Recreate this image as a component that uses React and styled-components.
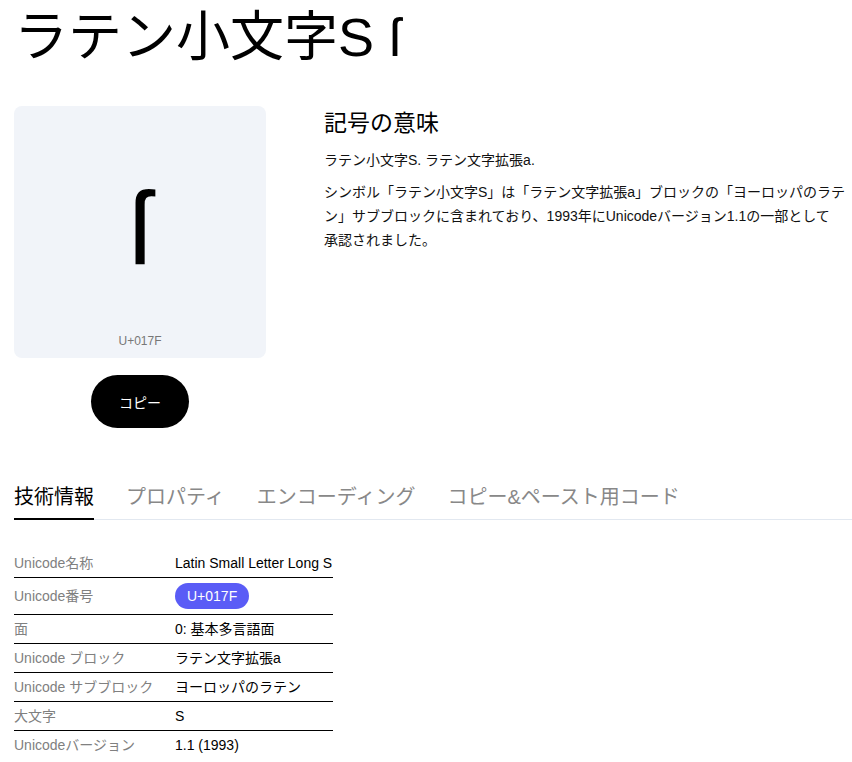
import React, { useState } from 'react';
import styled, { createGlobalStyle } from 'styled-components';

const GlobalStyle = createGlobalStyle`
    html, body {
        margin: 0;
        padding: 0;
        background: #fff;
    }
    body {
        font-family: "Liberation Sans", "Noto Sans CJK JP", sans-serif;
        color: #000;
    }
`

const Page = styled.div`
    padding: 0 0 0 14px;
`
const Title = styled.h1`
    margin: 0;
    padding-top: 6px;
    font-size: 54px;
    font-weight: 400;
    line-height: 63px;
    letter-spacing: 0;
`
const Overview = styled.section`
    display: grid;
    grid-template-columns: 252px 1fr;
    column-gap: 58px;
    margin-top: 37px;
`
const PreviewColumn = styled.div`
    display: flex;
    flex-direction: column;
    align-items: center;
`
const GlyphBox = styled.div`
    position: relative;
    width: 252px;
    height: 252px;
    border-radius: 8px;
    background: #f1f4f9;
    display: flex;
    align-items: center;
    justify-content: center;
`
const Glyph = styled.span`
    font-family: "Liberation Sans", sans-serif;
    font-size: 104px;
    line-height: 1;
    margin-top: -8px;
`
const CodeLabel = styled.span`
    position: absolute;
    left: 0;
    right: 0;
    bottom: 10px;
    text-align: center;
    font-size: 12px;
    color: #777;
`
const CopyButton = styled.button`
    margin-top: 17px;
    width: 98px;
    height: 53px;
    border: none;
    border-radius: 27px;
    background: #000;
    color: #fff;
    font-family: inherit;
    font-size: 14px;
    cursor: pointer;
`
const Meaning = styled.div`
    min-width: 0;
`
const MeaningTitle = styled.h2`
    margin: 0;
    font-size: 23px;
    font-weight: 400;
    line-height: 34px;
`
const Paragraph = styled.p`
    margin: 8px 0 0;
    font-size: 14px;
    line-height: 24px;
    color: #111;
`
const Tabs = styled.nav`
    display: flex;
    gap: 32px;
    margin-top: 54px;
    border-bottom: 1px solid #e2e8f0;
`
const Tab = styled.button`
    padding: 0 0 6px;
    margin-bottom: -1px;
    border: none;
    border-bottom: 2px solid ${p => (p.$active ? '#000' : 'transparent')};
    background: none;
    font-family: inherit;
    font-size: 20px;
    line-height: 30px;
    color: ${p => (p.$active ? '#000' : '#888')};
    cursor: pointer;
`
const InfoTable = styled.table`
    margin-top: 29px;
    width: 319px;
    border-collapse: collapse;
    font-size: 14px;
`
const Row = styled.tr`
    border-bottom: 1px solid #000;
    &:last-child {
        border-bottom: none;
    }
`
const Label = styled.td`
    width: 161px;
    padding: 4px 0;
    color: #808080;
    white-space: nowrap;
    line-height: 20px;
`
const Value = styled.td`
    padding: 4px 0;
    white-space: nowrap;
    line-height: 20px;
`
const Pill = styled.span`
    display: inline-block;
    margin: 1px 0;
    padding: 0 12px;
    height: 26px;
    line-height: 26px;
    border-radius: 13px;
    background: #5a5cf6;
    color: #fff;
`

const tabs = ['技術情報', 'プロパティ', 'エンコーディング', 'コピー&ペースト用コード']

const rows = [
    ['Unicode名称', 'Latin Small Letter Long S'],
    ['Unicode番号', 'U+017F', true],
    ['面', '0: 基本多言語面'],
    ['Unicode ブロック', 'ラテン文字拡張a'],
    ['Unicode サブブロック', 'ヨーロッパのラテン'],
    ['大文字', 'S'],
    ['Unicodeバージョン', '1.1 (1993)'],
]

const App = () => {
    const [active, setActive] = useState(0)
    return (
        <Page>
            <GlobalStyle />
            <Title>ラテン小文字S ſ</Title>
            <Overview>
                <PreviewColumn>
                    <GlyphBox>
                        <Glyph>ſ</Glyph>
                        <CodeLabel>U+017F</CodeLabel>
                    </GlyphBox>
                    <CopyButton>コピー</CopyButton>
                </PreviewColumn>
                <Meaning>
                    <MeaningTitle>記号の意味</MeaningTitle>
                    <Paragraph>ラテン小文字S. ラテン文字拡張a.</Paragraph>
                    <Paragraph>
                        シンボル「ラテン小文字S」は「ラテン文字拡張a」ブロックの「ヨーロッパのラテン」サブブロックに含まれており、1993年にUnicodeバージョン1.1の一部として<br />承認されました。
                    </Paragraph>
                </Meaning>
            </Overview>
            <Tabs>
                {tabs.map((t, i) => (
                    <Tab key={t} $active={i === active} onClick={() => setActive(i)}>{t}</Tab>
                ))}
            </Tabs>
            <InfoTable>
                <tbody>
                    {rows.map(([label, value, pill]) => (
                        <Row key={label}>
                            <Label>{label}</Label>
                            <Value>{pill ? <Pill>{value}</Pill> : value}</Value>
                        </Row>
                    ))}
                </tbody>
            </InfoTable>
        </Page>
    )
}

export default App;
